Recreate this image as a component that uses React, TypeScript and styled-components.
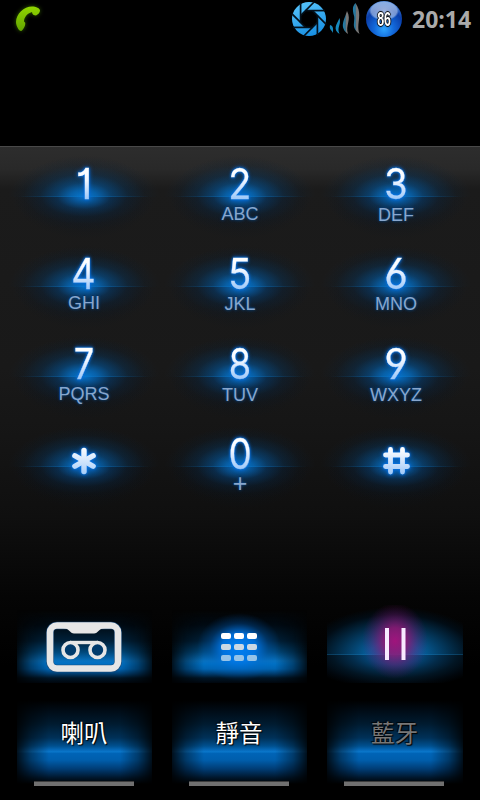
import React from "react";
import styled, { createGlobalStyle, css } from "styled-components";
import { Asterisk } from "lucide-react";

const GlobalStyle = createGlobalStyle`
  * { box-sizing: border-box; }
  body { margin: 0; background: #000; overflow: hidden; }
`;

const Screen = styled.main`
  width: 480px;
  height: 800px;
  display: flex;
  flex-direction: column;
  background: #000;
  font-family: "Liberation Sans", Arial, sans-serif;
`;

const StatusBar = styled.header`
  height: 38px;
  display: flex;
  align-items: center;
  padding: 0 9px 0 12px;
`;

const CallIcon = styled.svg`
  filter: drop-shadow(0 0 2px #315d00);
`;

const StatusIcons = styled.div`
  display: flex;
  align-items: center;
  margin-left: auto;
`;

const Battery = styled.div`
  width: 36px;
  height: 36px;
  margin-left: 5px;
  display: grid;
  place-items: center;
  border-radius: 50%;
  background:
    radial-gradient(ellipse 15px 10px at 50% 27%, rgba(255, 255, 255, 0.6) 0, rgba(220, 232, 250, 0.5) 85%, transparent 100%),
    radial-gradient(circle at 50% 78%, #2da4ff 0, #1267d8 30%, #0a3da8 60%, #4385dc 88%, #b8d4f4 100%);
`;

const BatteryLevel = styled.span`
  color: #fff;
  font: bold 20px/20px "Liberation Sans", sans-serif;
  transform: scaleX(0.62);
  text-shadow: 1px 0 1px #000, -1px 0 1px #000, 0 1px 1px #000, 0 -1px 1px #000;
`;

const Clock = styled.time`
  margin-left: 10px;
  width: 59px;
  color: #aaa;
  font: bold 23px/38px "Open Sans", sans-serif;
  white-space: nowrap;
`;

const NumberDisplay = styled.div`
  height: 108px;
`;

const DialPanel = styled.section`
  height: 537px;
  display: flex;
  flex-direction: column;
  border-top: 1px solid #494949;
  background: linear-gradient(#2d2d2d 0, #292929 22px, #1b1b1b 42px, #191919 220px, #151515 290px, #0f0f0f 370px, #050505 450px, #000 520px);
`;

const Keypad = styled.div`
  display: grid;
  grid-template-columns: repeat(3, 156px);
  grid-auto-rows: 90px;
  margin: 5px 6px 0;
`;

const Key = styled.div`
  display: flex;
  flex-direction: column;
  align-items: center;
  background:
    linear-gradient(90deg, transparent 12px, rgba(9, 124, 210, 0.25) 50px, rgba(9, 124, 210, 0.25) 106px, transparent 144px) 0 44px / 100% 1px no-repeat,
    radial-gradient(ellipse 76px 40px at 50% 100%, rgba(6, 126, 218, 0.95) 0, rgba(5, 114, 202, 0.8) 18%, rgba(5, 92, 164, 0.54) 36%, rgba(6, 70, 124, 0.28) 58%, rgba(6, 50, 90, 0.09) 80%, transparent 100%) 0 0 / 100% 45px no-repeat,
    radial-gradient(ellipse 74px 34px at 50% 0, rgba(6, 118, 210, 0.95) 0, rgba(5, 98, 178, 0.74) 18%, rgba(5, 72, 134, 0.44) 36%, rgba(6, 50, 94, 0.2) 58%, rgba(6, 30, 60, 0.07) 80%, transparent 100%) 0 45px / 100% 45px no-repeat,
    radial-gradient(ellipse 70px 42px at 50% 50%, rgba(10, 20, 30, 0.4) 40%, transparent 100%);
`;

const glow = css`
  filter: drop-shadow(0 0 1px #087cf0) drop-shadow(0 0 2px #0864d0);
`;

const Digit = styled.span<{ $stretch: number }>`
  height: 40px;
  margin-top: 12px;
  padding: 0 4px;
  font: 400 42px/40px Inter, sans-serif;
  -webkit-text-stroke: 0.35px transparent;
  font-feature-settings: "cv01" 1, "cv03" 1, "cv04" 1;
  transform: scaleX(${(p) => p.$stretch});
  color: transparent;
  background: linear-gradient(#fff 6px, #f2f7ff 16px, #9ec8f8 35px);
  background-clip: text;
  -webkit-background-clip: text;
  ${glow}
`;

const Letters = styled.span<{ $drop?: number }>`
  margin-top: ${(p) => 1 + (p.$drop ?? 0)}px;
  color: #87a6cd;
  font-size: 18px;
  line-height: 18px;
  text-shadow: 0 0 3px #0754a0, 0 -1px 1px #0b2a4c;
`;

const Plus = styled(Letters)`
  margin-top: 0;
  font-size: 25px;
  line-height: 19px;
`;

const SymbolIcon = styled.div`
  margin-top: 23px;
  height: 32px;
  ${glow}
  svg { display: block; }
`;

const StarIcon = styled(SymbolIcon)`
  margin-top: 18px;
  height: 44px;
`;

const Actions = styled.div`
  display: grid;
  grid-template-columns: 135px 135px 136px;
  column-gap: 20px;
  margin: auto 17px 0;
`;

const sideFade = css`
  mask-image: linear-gradient(90deg, rgba(0, 0, 0, 0.15), rgba(0, 0, 0, 0.6) 14px, #000 32px, #000 calc(100% - 32px), rgba(0, 0, 0, 0.6) calc(100% - 14px), rgba(0, 0, 0, 0.15));
`;

const ActionButton = styled.button`
  position: relative;
  height: 78px;
  padding: 0 2px 0 0;
  border: 0;
  background: none;
  display: flex;
  justify-content: center;
  svg { position: relative; display: block; }
`;

const ActionGlow = styled.span<{ $soft?: boolean }>`
  position: absolute;
  inset: 0;
  ${(p) =>
    p.$soft
      ? css`
          background:
            linear-gradient(rgba(30, 130, 190, 0.3), rgba(30, 130, 190, 0.3)) 0 49px / 100% 1px no-repeat,
            radial-gradient(ellipse 92px 48px at 50% 100%, #0876c0 0, #06619f 28%, #044470 46%, #02263f 66%, #010c15 84%, transparent 100%) 0 0 / 100% 50px no-repeat,
            radial-gradient(ellipse 92px 34px at 50% 0, #075e9c 0, #044779 28%, #032b49 48%, #021523 68%, #01070d 86%, transparent 100%) 0 50px / 100% 28px no-repeat;
        `
      : css`
          background: linear-gradient(transparent 5px, #000a13 20px, #00213a 36px, #00477a 47px, #0872c0 56px, #0070c4 59px, #0064b2 64px, #003a6a 69px, #001526 73px, #00060d 78px);
          ${sideFade}
        `}
`;

const Toggle = styled.button<{ $disabled?: boolean }>`
  position: relative;
  height: 90px;
  padding: 0 2px 0 0;
  border: 0;
  background: none;
  display: flex;
  flex-direction: column;
  align-items: center;
  color: ${(p) => (p.$disabled ? "#777" : "#fff")};
`;

const ToggleGlow = styled.span`
  position: absolute;
  inset: 0;
  background: linear-gradient(#000 0, #000b15 10px, #001b30 24px, #003158 38px, #00508f 46px, #0871c5 51px, #0b79cc 52px, #0064b7 53px, #005eac 60px, #003c74 69px, #001529 78px, #000 84px);
  ${sideFade}
`;

const ToggleLabel = styled.span`
  position: relative;
  margin-top: 16px;
  height: 65px;
  padding-left: 1px;
  font: 400 23.5px/33px "Noto Sans CJK TC", sans-serif;
  text-shadow: 1px 1px 1px #000, -1px -1px 1px rgba(0, 0, 0, 0.8);
`;

const Indicator = styled.span`
  position: relative;
  width: 100px;
  height: 5px;
  background: #707070;
  border-top: 1px solid #3c3c3c;
`;

const ToggleRow = styled(Actions)`
  margin: 17px 17px 0;
`;

interface KeySpec {
  digit: string;
  letters?: string;
  drop?: number;
  stretch?: number;
}

const keys: KeySpec[] = [
  { digit: "1", stretch: 1 },
  { digit: "2", letters: "ABC" },
  { digit: "3", letters: "DEF", drop: 1 },
  { digit: "4", letters: "GHI", drop: -1 },
  { digit: "5", letters: "JKL" },
  { digit: "6", letters: "MNO", stretch: 0.97 },
  { digit: "7", letters: "PQRS", stretch: 0.86 },
  { digit: "8", letters: "TUV", drop: 1, stretch: 0.86 },
  { digit: "9", letters: "WXYZ", drop: 1, stretch: 0.97 },
  { digit: "*" },
  { digit: "0", letters: "+", stretch: 0.88 },
  { digit: "#" },
];

const PhoneIcon = () => (
  <CallIcon width="32" height="34" viewBox="0 0 32 34">
    <defs>
      <linearGradient id="phone" x1="0" y1="0" x2="0" y2="1">
        <stop stopColor="#91d600" />
        <stop offset="1" stopColor="#63a500" />
      </linearGradient>
    </defs>
    <path fill="url(#phone)" d="M4 20C4 12 12 4.500 20 4.500c4 0 8 2 8 4 0 2-2 4-4 5-2 0-4-1-4-3.500-5 1.500-8 5.500-8 9.500l1 1c1 2-1 6-3 8-1 1-3 0-4-2-1-2-2-4-2-6.500Z" />
  </CallIcon>
);

const ApertureIcon = () => (
  <svg width="36" height="36" viewBox="-18 -18 36 36">
    <defs>
      <linearGradient id="blade" gradientUnits="userSpaceOnUse" x1="-6" y1="-17" x2="6" y2="17">
        <stop stopColor="#55c2fa" />
        <stop offset="1" stopColor="#168ee2" />
      </linearGradient>
    </defs>
    <circle r="17" fill="url(#blade)" />
    <path fill="#000" d="M-3.500-8.400H3.500L8.400-3.500V3.500L3.500 8.400H-3.500L-8.400 3.500V-3.500Z" />
    {[0, 45, 90, 135, 180, 225, 270, 315].map((angle) => (
      <path key={angle} transform={`rotate(${angle})`} d="M-3.500-8.400L16-8.400" stroke="#03111c" strokeWidth="1.700" />
    ))}
  </svg>
);

const SignalIcon = () => (
  <svg width="34" height="34" viewBox="0 0 31 34">
    <defs>
      <linearGradient id="wave" x1="0" y1="0" x2="1" y2="0">
        <stop stopColor="#187fb0" />
        <stop offset="0.45" stopColor="#36718d" />
        <stop offset="0.55" stopColor="#777" />
      </linearGradient>
    </defs>
    <path fill="#1587bd" d="M1.500 23c4 1 3 5 3 8-1-3-4-3-3-8Z" />
    <path fill="#168abf" d="M11 16c2 7-3 9 0 16-7-5-3-9 0-16Z" />
    <path fill="url(#wave)" d="M18.500 9c5 9-2 14 1 23-9-7-4-13-1-23Z" />
    <path fill="url(#wave)" d="M27 1c8 12 0 21 4 31-10-7-3-13-6-20-1-5-1-8 2-11Z" />
  </svg>
);

const HashIcon = () => (
  <svg width="32" height="32" viewBox="0 0 32 32">
    <defs>
      <linearGradient id="symbol" gradientUnits="userSpaceOnUse" x1="0" y1="4" x2="0" y2="29">
        <stop stopColor="#fff" />
        <stop offset="1" stopColor="#9ec8f8" />
      </linearGradient>
    </defs>
    <path d="M10.500 4.500v22.500M22.500 4.500v22.500M5.500 10h22M5.500 21.500h22" fill="none" stroke="url(#symbol)" strokeWidth="4.8" strokeLinecap="round" />
  </svg>
);

const CassetteIcon = () => (
  <svg width="76" height="78" viewBox="0 0 76 78" fill="none" stroke="#e6e6e6">
    <rect x="4" y="20.5" width="68" height="43" rx="7" stroke="#1d4b78" strokeWidth="7.600" />
    <rect x="4" y="20.5" width="68" height="43" rx="7" strokeWidth="6.600" />
    <path d="M17 23h42c-6 0-7 5.500-11 5.500H28C24 28.500 23 23 17 23Z" fill="#e6e6e6" stroke="none" />
    <path d="M24 37.500h28" strokeWidth="3.400" />
    <circle cx="24.5" cy="45" r="7.500" strokeWidth="3.600" fill="#003b6c" />
    <circle cx="51.5" cy="45" r="7.500" strokeWidth="3.600" fill="#003b6c" />
  </svg>
);

const PadIcon = () => (
  <svg width="110" height="78" viewBox="-5 0 110 78">
    <defs>
      <radialGradient id="padGlow">
        <stop stopColor="#0080f4" />
        <stop offset="0.4" stopColor="#007af0" stopOpacity="0.85" />
        <stop offset="0.7" stopColor="#0068d0" stopOpacity="0.3" />
        <stop offset="1" stopColor="#0060c0" stopOpacity="0" />
      </radialGradient>
    </defs>
    <ellipse cx="50" cy="42" rx="42" ry="34" fill="url(#padGlow)" />
    {["#fff", "#cbd8e3", "#95c3e8"].map((color, row) =>
      [0, 1, 2].map((col) => (
        <rect key={`${row}${col}`} x={32 + col * 13} y={28 + row * 11} width="10" height="6" rx="2" fill={color} />
      )),
    )}
  </svg>
);

const PauseIcon = () => (
  <svg width="80" height="78" viewBox="0 0 80 78">
    <defs>
      <radialGradient id="pauseGlow">
        <stop stopColor="#a0147c" />
        <stop offset="0.35" stopColor="#931674" stopOpacity="0.85" />
        <stop offset="0.7" stopColor="#7a1470" stopOpacity="0.35" />
        <stop offset="1" stopColor="#680d67" stopOpacity="0" />
      </radialGradient>
    </defs>
    <ellipse cx="41" cy="36" rx="33" ry="38" fill="url(#pauseGlow)" />
    <path d="M33 23v32M49.500 23v32" stroke="#f8e9ff" strokeWidth="4" />
  </svg>
);

const KeyFace = ({ digit, stretch = 0.9 }: KeySpec) => {
  if (digit === "*")
    return (
      <StarIcon>
        <Asterisk size={42} stroke="url(#symbolStar)" strokeWidth={3.1}>
          <defs>
            <linearGradient id="symbolStar" gradientUnits="userSpaceOnUse" x1="0" y1="4" x2="0" y2="21">
              <stop stopColor="#fff" />
              <stop offset="1" stopColor="#9ec8f8" />
            </linearGradient>
          </defs>
        </Asterisk>
      </StarIcon>
    );
  if (digit === "#")
    return (
      <SymbolIcon>
        <HashIcon />
      </SymbolIcon>
    );
  return <Digit $stretch={stretch}>{digit}</Digit>;
};

export default function App() {
  return (
    <Screen>
      <GlobalStyle />
      <StatusBar>
        <PhoneIcon />
        <StatusIcons>
          <ApertureIcon />
          <SignalIcon />
          <Battery>
            <BatteryLevel>86</BatteryLevel>
          </Battery>
          <Clock>20:14</Clock>
        </StatusIcons>
      </StatusBar>
      <NumberDisplay />
      <DialPanel>
        <Keypad>
          {keys.map((item) => (
            <Key key={item.digit}>
              <KeyFace {...item} />
              {item.letters === "+" ? <Plus>+</Plus> : item.letters && <Letters $drop={item.drop}>{item.letters}</Letters>}
            </Key>
          ))}
        </Keypad>
        <Actions>
          <ActionButton aria-label="Voicemail">
            <ActionGlow />
            <CassetteIcon />
          </ActionButton>
          <ActionButton aria-label="Keypad">
            <ActionGlow />
            <PadIcon />
          </ActionButton>
          <ActionButton aria-label="Hold">
            <ActionGlow $soft />
            <PauseIcon />
          </ActionButton>
        </Actions>
      </DialPanel>
      <ToggleRow>
        {["喇叭", "靜音", "藍牙"].map((label) => (
          <Toggle key={label} $disabled={label === "藍牙"}>
            <ToggleGlow />
            <ToggleLabel>{label}</ToggleLabel>
            <Indicator />
          </Toggle>
        ))}
      </ToggleRow>
    </Screen>
  );
}
